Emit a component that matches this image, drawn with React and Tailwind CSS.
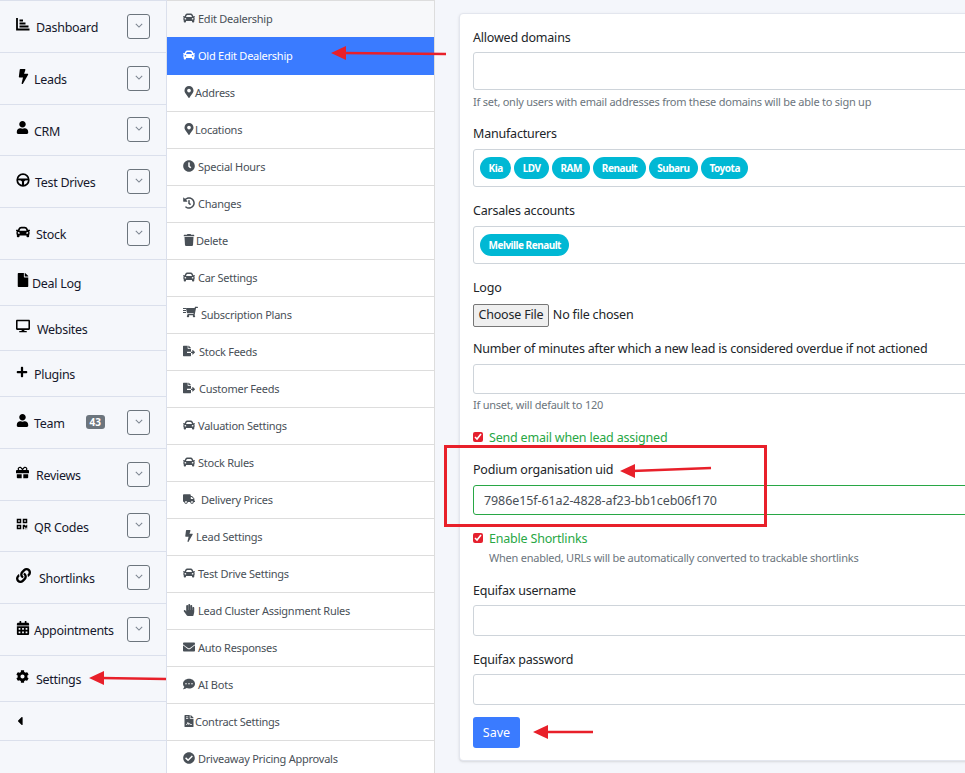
import React from "react";
import {
  FaBolt, FaCalendarAlt, FaCar, FaCaretLeft, FaCheckCircle, FaClock, FaCog, FaCommentDots,
  FaDesktop, FaEnvelope, FaFile, FaFileContract, FaFileExport, FaGift, FaHandPaper, FaHistory, FaLink,
  FaMapMarkerAlt, FaPlus, FaQrcode, FaShoppingCart, FaTrash, FaTruck, FaUser,
} from "react-icons/fa";

const Wheel = (props) => (
  <svg viewBox="0 0 16 16" {...props}>
    <circle cx="8" cy="8" r="6.6" fill="none" stroke="currentColor" strokeWidth="2" />
    <path d="M1.8 6.4h12.4v1.8l-3.6.4-1.4 1.2v4H6.8v-4L5.400 8.600l-3.600-.4z" fill="currentColor" />
  </svg>
);

const Bars = (props) => (
  <svg viewBox="0 0 14 14" {...props}>
    <path d="M1 1v11.500h12.500" fill="none" stroke="currentColor" strokeWidth="1.800" />
    <path d="M3.500 2.500h3.500v2H3.500zM3.500 5.500h6v2h-6zM3.500 8.500h9v2h-9z" fill="currentColor" />
  </svg>
);

const FastCart = () => (
  <span className="relative inline-block w-[14px] h-[12px]">
    <span className="absolute left-0 top-[2px] w-[3px] h-px bg-current" />
    <span className="absolute left-0 top-[4px] w-[3px] h-px bg-current" />
    <span className="absolute left-0 top-[6px] w-[3px] h-px bg-current" />
    <FaShoppingCart className="absolute left-[3px] top-0 text-[12px] -scale-x-100" />
  </span>
);

const mainNav = [
  { icon: Bars, label: "Dashboard", w: 20, menu: true, size: 14 },
  { icon: FaBolt, label: "Leads", w: 18, menu: true, size: 15 },
  { icon: FaUser, label: "CRM", w: 18, menu: true, size: 13 },
  { icon: Wheel, label: "Test Drives", w: 19, menu: true, size: 14 },
  { icon: FaCar, label: "Stock", w: 20, menu: true, size: 14 },
  { icon: FaFile, label: "Deal Log", w: 16, size: 14 },
  { icon: FaDesktop, label: "Websites", w: 21, size: 14 },
  { icon: FaPlus, label: "Plugins", w: 18, size: 12 },
  { icon: FaUser, label: "Team", w: 18, menu: true, badge: "43", size: 13 },
  { icon: FaGift, label: "Reviews", w: 20, menu: true, size: 13 },
  { icon: FaQrcode, label: "QR Codes", w: 18, menu: true, size: 12 },
  { icon: FaLink, label: "Shortlinks", w: 23, menu: true, size: 15 },
  { icon: FaCalendarAlt, label: "Appointments", w: 18, menu: true, size: 14 },
  { icon: FaCog, label: "Settings", w: 20, size: 13 },
];

const settingsNav = [
  { icon: FaCar, label: "Edit Dealership", w: 15 },
  { icon: FaCar, label: "Old Edit Dealership", w: 15, active: true },
  { icon: FaMapMarkerAlt, label: "Address", w: 12 },
  { icon: FaMapMarkerAlt, label: "Locations", w: 12 },
  { icon: FaClock, label: "Special Hours", w: 15 },
  { icon: FaHistory, label: "Changes", w: 15 },
  { icon: FaTrash, label: "Delete", w: 13 },
  { icon: FaCar, label: "Car Settings", w: 15 },
  { icon: FastCart, label: "Subscription Plans", w: 18 },
  { icon: FaFileExport, label: "Stock Feeds", w: 16 },
  { icon: FaFileExport, label: "Customer Feeds", w: 16 },
  { icon: FaCar, label: "Valuation Settings", w: 15 },
  { icon: FaCar, label: "Stock Rules", w: 15 },
  { icon: FaTruck, label: "Delivery Prices", w: 18 },
  { icon: FaBolt, label: "Lead Settings", w: 13 },
  { icon: FaCar, label: "Test Drive Settings", w: 15 },
  { icon: FaHandPaper, label: "Lead Cluster Assignment Rules", w: 15 },
  { icon: FaEnvelope, label: "Auto Responses", w: 15 },
  { icon: FaCommentDots, label: "AI Bots", w: 15 },
  { icon: FaFileContract, label: "Contract Settings", w: 12 },
  { icon: FaCheckCircle, label: "Driveaway Pricing Approvals", w: 15 },
];

const manufacturers = ["Kia", "LDV", "RAM", "Renault", "Subaru", "Toyota"];

function Chevron() {
  return (
    <button className="ml-auto mr-4 w-[23px] h-[25px] shrink-0 border border-[#6c757d] rounded-[3px] flex items-center justify-center">
      <svg viewBox="0 0 10 6" className="w-[8px] h-[5px] -mt-0.5">
        <path d="M1 1l4 4 4-4" fill="none" stroke="#7b8490" strokeWidth="1.300" />
      </svg>
    </button>
  );
}

function MainNavItem({ item }) {
  const Icon = item.icon;
  const tall = item.menu;
  return (
    <div className={`flex items-center pl-4 border-b border-[#dbe0ec] ${tall ? "h-[51.8px]" : "h-[45.67px]"}`}>
      <span className="shrink-0 -mt-1" style={{ width: item.w, fontSize: item.size }}>
        <Icon className="h-[1em] w-auto text-black" />
      </span>
      <span className="pt-[4px] text-[12.5px] tracking-[-0.3px] text-[#16182c] whitespace-nowrap">{item.label}</span>
      {item.badge && (
        <span className="ml-[21px] w-[19px] h-[14px] rounded-[3px] bg-[#6c757d] text-white text-[10px] font-bold leading-[14px] text-center">
          {item.badge}
        </span>
      )}
      {item.menu && <Chevron />}
    </div>
  );
}

function SettingsNavItem({ item, index }) {
  const Icon = item.icon;
  const rowClass = item.active
    ? "h-[38px] bg-[#3a7bff] text-white"
    : index === 0
      ? "h-[37px] bg-[#f7f8fa] text-[#495057] border-t border-[#dddddd]"
      : "h-[37px] bg-white text-[#495057] border-b border-[#dddddd]";
  return (
    <div className={`flex items-center pl-4 ${rowClass}`}>
      <span className="shrink-0 text-[12px] -mt-0.5" style={{ width: item.w }}>
        <Icon className="h-[12px] w-auto" />
      </span>
      <span className="text-[11px] tracking-[-0.25px] whitespace-nowrap">{item.label}</span>
    </div>
  );
}

function Label({ children, className = "" }) {
  return (
    <div className={`h-[16px] pt-px text-[12.5px] tracking-[-0.2px] leading-[16px] text-[#212529] ${className}`}>
      {children}
    </div>
  );
}

function TextBox({ className = "", value = "" }) {
  return (
    <input
      readOnly
      value={value}
      className={`block w-full bg-white border border-[#ced4da] rounded-[3px] px-[10px] text-[12.5px] tracking-[-0.1px] text-[#495057] ${className}`}
    />
  );
}

function Hint({ children, className = "" }) {
  return <div className={`text-[11px] tracking-[-0.24px] leading-[14px] text-[#6c757d] ${className}`}>{children}</div>;
}

function Chip({ children }) {
  return (
    <span className="h-[22px] px-[8.500px] rounded-full bg-[#00b8d4] text-white text-[10px] tracking-[-0.5px] font-bold leading-[22px] whitespace-nowrap">
      {children}
    </span>
  );
}

function Check({ children, className = "" }) {
  return (
    <label className={`flex items-center h-[16px] ${className}`}>
      <input type="checkbox" readOnly checked className="w-[10px] h-[10px] m-0 accent-[#e5202e]" />
      <span className="ml-[6px] h-[16px] pt-px text-[12.5px] tracking-[-0.2px] leading-[16px] text-[#28a745]">{children}</span>
    </label>
  );
}

function Arrow({ className, x1, y1, x2, y2, w, h }) {
  // tail at x1,y1 and tip at x2,y2, in the svg's own box
  return (
    <svg className={`absolute ${className}`} width={w} height={h} viewBox={`0 0 ${w} ${h}`}>
      <line x1={x1} y1={y1} x2={x2 + 12} y2={y2} stroke="#e8202a" strokeWidth="2.500" />
      <polygon points={`${x2},${y2} ${x2 + 15},${y2 - 7} ${x2 + 15},${y2 + 7}`} fill="#e8202a" />
    </svg>
  );
}

export default function App() {
  return (
    <div className="relative flex w-[965px] h-[773px] overflow-hidden bg-[#f4f6fb] font-['Noto_Sans',sans-serif]">
      <aside className="w-[167px] shrink-0 bg-[#f5f7fb] border-r border-t border-[#dbe0ec]">
        {mainNav.map((item) => (
          <MainNavItem key={item.label} item={item} />
        ))}
        <div className="h-[39px] flex items-center pl-4 border-b border-[#dbe0ec]">
          <FaCaretLeft className="-ml-[3px] text-[14px] text-black" />
        </div>
      </aside>

      <nav className="w-[268px] shrink-0 border-r border-[#dddddd]">
        {settingsNav.map((item, index) => (
          <SettingsNavItem key={item.label} item={item} index={index} />
        ))}
      </nav>

      <main className="flex-1 min-w-0 overflow-hidden pl-[24px] pt-[13px]">
        <form className="w-[640px] h-[748px] bg-white border border-[#e3e6ee] rounded-[4px] shadow-sm px-[13px] pt-[15px]">
          <Label>Allowed domains</Label>
          <TextBox className="h-[38px] mt-[7px]" />
          <Hint className="mt-[5px]">If set, only users with email addresses from these domains will be able to sign up</Hint>

          <Label className="mt-[16px]">Manufacturers</Label>
          <div className="h-[38px] mt-[8px] flex items-center gap-[3px] px-[6px] border border-[#ced4da] rounded-[3px]">
            {manufacturers.map((m) => (
              <Chip key={m}>{m}</Chip>
            ))}
          </div>

          <Label className="mt-[15px]">Carsales accounts</Label>
          <div className="h-[38px] mt-[8px] flex items-center px-[6px] border border-[#ced4da] rounded-[3px]">
            <Chip>Melville Renault</Chip>
          </div>

          <Label className="mt-[15px]">Logo</Label>
          <input
            type="file"
            className="block mt-[9px] h-[23px] text-[12.5px] tracking-[-0.2px] text-[#212529] file:h-[23px] file:px-[4.500px] file:mr-[4px] file:bg-[#efefef] file:border file:border-[#767676] file:rounded-[2px]"
          />

          <Label className="mt-[13px]">Number of minutes after which a new lead is considered overdue if not actioned</Label>
          <TextBox className="h-[30px] mt-[8px]" />
          <Hint className="mt-[4px]">If unset, will default to 120</Hint>

          <Check className="mt-[17px]">Send email when lead assigned</Check>

          <Label className="mt-[16px]">Podium organisation uid</Label>
          <TextBox className="h-[30px] mt-[8px] !border-[#28a745]" value="7986e15f-61a2-4828-af23-bb1ceb06f170" />

          <Check className="mt-[15px]">Enable Shortlinks</Check>
          <Hint className="mt-[5px] pl-[16px]">When enabled, URLs will be automatically converted to trackable shortlinks</Hint>

          <Label className="mt-[17px]">Equifax username</Label>
          <TextBox className="h-[31px] mt-[7px]" />

          <Label className="mt-[15px]">Equifax password</Label>
          <TextBox className="h-[31px] mt-[7px]" />

          <button type="button" className="block mt-[12px] w-[47px] h-[31px] pt-[2px] rounded-[3px] bg-[#3a7bff] text-white text-[12.5px]">
            Save
          </button>
        </form>
      </main>

      {/* annotations drawn on top of the screenshot */}
      <Arrow className="left-[330px] top-[46px]" w={116} h={16} x1={116} y1={8} x2={1} y2={7} />
      <Arrow className="left-[88px] top-[670px]" w={78} h={16} x1={78} y1={9} x2={1} y2={8} />
      <Arrow className="left-[619px] top-[461px]" w={93} h={18} x1={92} y1={7} x2={1} y2={10} />
      <Arrow className="left-[532px] top-[724px]" w={62} h={16} x1={61} y1={8} x2={1} y2={8} />
      <div className="absolute left-[444px] top-[445px] w-[323px] h-[82px] border-[3px] border-[#e8202a]" />
    </div>
  );
}
